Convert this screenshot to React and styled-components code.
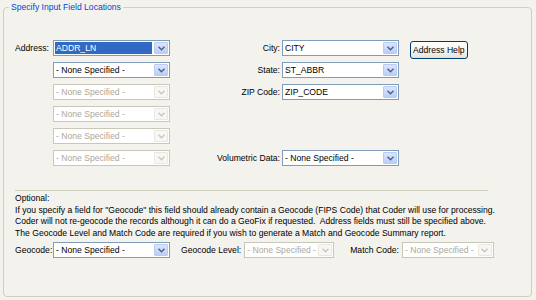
import React from 'react';
import styled, { createGlobalStyle } from 'styled-components';

const GlobalStyle = createGlobalStyle`
  html, body {
    margin:0;
    padding:0;
    background:#f3f2ec;
  }
  body {
    font-family:"Liberation Sans", Arial, sans-serif;
    font-size:8.6px;
    color:#000;
  }
`

const Page = styled.div`
  width:536px;
  height:300px;
  box-sizing:border-box;
  padding:1px 4px 0 3px;
`

const Group = styled.fieldset`
  margin:0;
  box-sizing:border-box;
  height:296px;
  padding:0 0 0 11px;
  border:1px solid #d0d0bf;
  border-radius:4px;
`

const Legend = styled.legend`
  margin-left:-6px;
  padding:0 2px;
  line-height:12px;
  color:#0046d5;
`

const FieldGrid = styled.div`
  display:grid;
  grid-template-columns:38px 117px 112px 117px auto;
  grid-template-rows:repeat(6, 16px);
  row-gap:6px;
  align-items:center;
  padding-top:27px;
`

const Label = styled.span`
  white-space:nowrap;
  text-align:${({ $right }) => ($right ? 'right' : 'left')};
  padding-right:${({ $right }) => ($right ? '2px' : '0')};
  ${({ $w }) => $w && `width:${$w}px;`}
`

const Combo = styled.div`
  display:flex;
  align-items:stretch;
  box-sizing:border-box;
  width:${({ $w }) => $w || 117}px;
  height:16px;
  border:1px solid ${({ $disabled }) => ($disabled ? '#c9c7ba' : '#7f9db9')};
  background:#fff;
  padding:1px;
`

const ComboText = styled.div`
  flex:1;
  display:flex;
  align-items:center;
  overflow:hidden;
  white-space:nowrap;
  padding-left:1px;
  margin-right:2px;
  color:${({ $disabled }) => ($disabled ? '#aca899' : '#000')};
  background:${({ $selected }) => ($selected ? '#316ac5' : 'transparent')};
  ${({ $selected }) => $selected && 'color:#fff;'}
`

const Arrow = styled.div`
  width:14px;
  flex:none;
  box-sizing:border-box;
  display:flex;
  align-items:center;
  justify-content:center;
  border:1px solid ${({ $disabled }) => ($disabled ? '#e8e7e0' : '#b9cbf3')};
  border-radius:1px;
  background:${({ $disabled }) =>
    $disabled ? '#f7f7f4' : 'linear-gradient(#dbe5fd, #bccdf7)'};
`

const HelpButton = styled.button`
  align-self:start;
  justify-self:start;
  margin:1px 0 0 11px;
  height:18px;
  padding:0 2px;
  font:inherit;
  color:#000;
  border:1px solid #003c74;
  border-radius:3px;
  background:linear-gradient(#ffffff, #f3f3ef 60%, #e3e2da);
  white-space:nowrap;
`

const Separator = styled.div`
  width:473px;
  height:1px;
  background:#d0d0bf;
  margin-top:24px;
`

const Notes = styled.div`
  margin-top:2px;
  line-height:11.5px;
`

const BottomRow = styled.div`
  display:flex;
  align-items:center;
  margin-top:3px;
  height:16px;
`

const Pair = styled.div`
  display:flex;
  align-items:center;
  gap:3px;
  margin-left:${({ $offset }) => $offset || 0}px;
`

function Chevron({ disabled }) {
  return (
    <svg width="7" height="5" viewBox="0 0 7 5">
      <path
        d="M0.5 0.8 L3.5 3.8 L6.5 0.8"
        fill="none"
        stroke={disabled ? '#c9c7ba' : '#4d6185'}
        strokeWidth="1.4"
      />
    </svg>
  );
}

function Dropdown({ value = '- None Specified -', disabled, selected, width }) {
  return (
    <Combo $disabled={disabled} $w={width}>
      <ComboText $disabled={disabled} $selected={selected}>{value}</ComboText>
      <Arrow $disabled={disabled}><Chevron disabled={disabled} /></Arrow>
    </Combo>
  );
}

export default function App() {
  return (
    <Page>
      <GlobalStyle />
      <Group>
        <Legend>Specify Input Field Locations</Legend>
        <FieldGrid>
          <Label>Address:</Label>
          <Dropdown value="ADDR_LN" selected />
          <Label $right>City:</Label>
          <Dropdown value="CITY" />
          <HelpButton>Address Help</HelpButton>

          <span />
          <Dropdown />
          <Label $right>State:</Label>
          <Dropdown value="ST_ABBR" />
          <span />

          <span />
          <Dropdown disabled />
          <Label $right>ZIP Code:</Label>
          <Dropdown value="ZIP_CODE" />
          <span />

          <span />
          <Dropdown disabled />
          <span /><span /><span />

          <span />
          <Dropdown disabled />
          <span /><span /><span />

          <span />
          <Dropdown disabled />
          <Label $right>Volumetric Data:</Label>
          <Dropdown />
          <span />
        </FieldGrid>
        <Separator />
        <Notes>
          Optional:<br />
          If you specify a field for "Geocode" this field should already contain a Geocode (FIPS Code) that Coder will use for processing.<br />
          Coder will not re-geocode the records although it can do a GeoFix if requested.&nbsp; Address fields must still be specified above.<br />
          The Geocode Level and Match Code are required if you wish to generate a Match and Geocode Summary report.
        </Notes>
        <BottomRow>
          <Pair>
            <Label $w={35}>Geocode:</Label>
            <Dropdown />
          </Pair>
          <Pair $offset={11}>
            <Label>Geocode Level:</Label>
            <Dropdown disabled width={90} />
          </Pair>
          <Pair $offset={16}>
            <Label>Match Code:</Label>
            <Dropdown disabled width={92} />
          </Pair>
        </BottomRow>
      </Group>
    </Page>
  );
}
